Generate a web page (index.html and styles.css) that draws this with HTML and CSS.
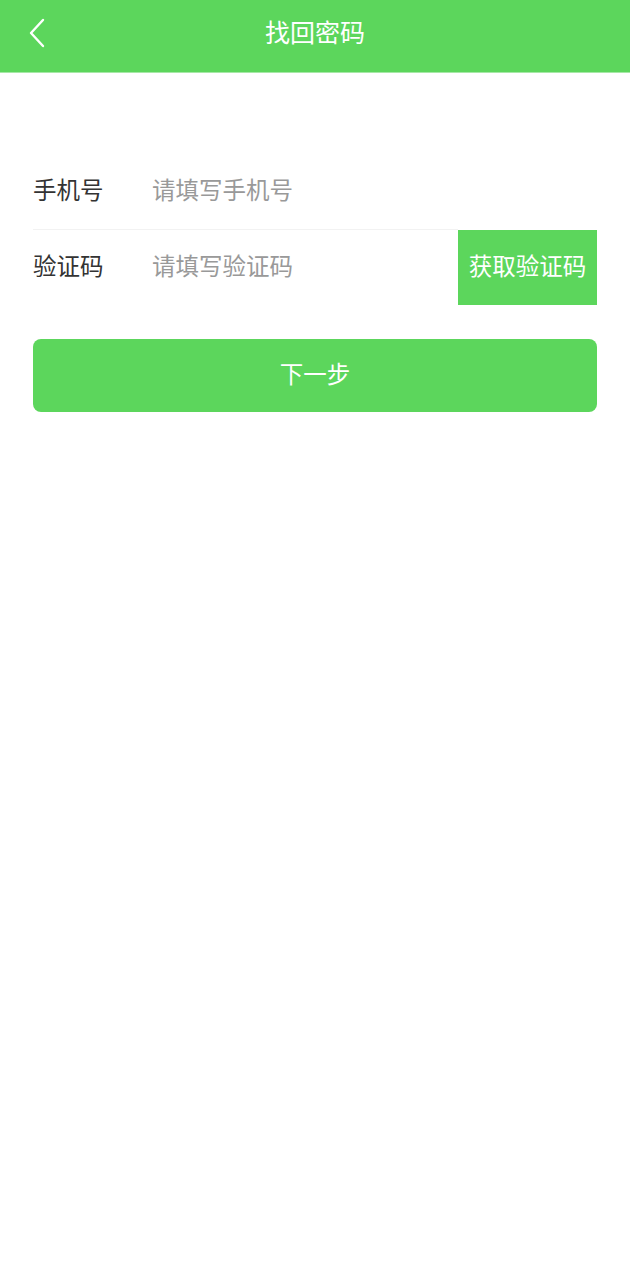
FILE: index.html
```html
<!DOCTYPE html>
<html lang="zh">
<head>
<meta charset="utf-8">
<link rel="stylesheet" href="styles.css">
</head>
<body>
<header class="bar">
  <span class="back"><svg width="18" height="30" viewBox="0 0 18 30"><path d="M15 2 L3 15 L15 28" fill="none" stroke="#fff" stroke-width="2.4" stroke-linecap="round" stroke-linejoin="round"/></svg></span>
  <h1 class="title">找回密码</h1>
</header>
<main class="form">
  <div class="row row-first">
    <label class="label">手机号</label>
    <span class="input">请填写手机号</span>
  </div>
  <div class="row">
    <label class="label">验证码</label>
    <span class="input">请填写验证码</span>
    <span class="code-btn"><span class="txt">获取验证码</span></span>
  </div>
  <div class="next"><span class="txt">下一步</span></div>
</main>
</body>
</html>
```
FILE: styles.css
```css
html, body { margin: 0; padding: 0; background: #fff; }
body { font-family: "Noto Sans CJK SC", "Noto Sans", sans-serif; width: 630px; }
.bar {
  height: 72px;
  background: #5cd65c;
  border-bottom: 1px solid #a6e8a6;
  display: flex;
  align-items: center;
  justify-content: center;
  position: relative;
}
.back { position: absolute; left: 28px; top: 18px; display: block; height: 30px; }
.title { margin: 0; font-size: 25px; font-weight: 400; color: #fff; line-height: 1; position: relative; top: -5px; }
.form { padding: 81px 33px 0 33px; }
.row {
  height: 75px;
  display: flex;
  align-items: center;
}
.row-first { border-bottom: 1px solid #f2f2f2; margin-right: 139px; }
.label, .input, .txt { line-height: 1; position: relative; top: -2px; }
.label { width: 119px; font-size: 23.5px; color: #333; }
.input { flex: 1; font-size: 23.5px; color: #999; }
.code-btn {
  width: 139px;
  height: 75px;
  background: #5cd65c;
  color: #fff;
  font-size: 23.5px;
  display: flex;
  align-items: center;
  justify-content: center;
}
.next {
  margin-top: 34px;
  height: 73px;
  background: #5cd65c;
  border-radius: 8px;
  color: #fff;
  font-size: 23.5px;
  display: flex;
  align-items: center;
  justify-content: center;
}
```
